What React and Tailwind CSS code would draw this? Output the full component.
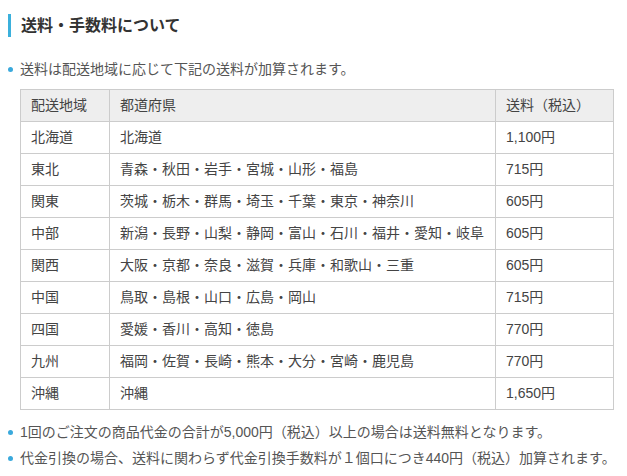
import React from 'react';

const rows = [
  ['北海道', '北海道', '1,100円'],
  ['東北', '青森・秋田・岩手・宮城・山形・福島', '715円'],
  ['関東', '茨城・栃木・群馬・埼玉・千葉・東京・神奈川', '605円'],
  ['中部', '新潟・長野・山梨・静岡・富山・石川・福井・愛知・岐阜', '605円'],
  ['関西', '大阪・京都・奈良・滋賀・兵庫・和歌山・三重', '605円'],
  ['中国', '鳥取・島根・山口・広島・岡山', '715円'],
  ['四国', '愛媛・香川・高知・徳島', '770円'],
  ['九州', '福岡・佐賀・長崎・熊本・大分・宮崎・鹿児島', '770円'],
  ['沖縄', '沖縄', '1,650円'],
];

const Bullet = ({ children }) => (
  <li className="flex items-center h-[24px] text-[14px] text-[#555] whitespace-nowrap">
    <span className="w-[5px] h-[5px] rounded-full bg-[#3aa9dc] ml-[8px] mr-[7px] shrink-0" />
    <span>{children}</span>
  </li>
);

const App = () => {
  return (
    <div
      className="w-[627px] h-[476px] bg-white overflow-hidden pt-[14px]"
      style={{ fontFamily: '"Liberation Sans", "Noto Sans CJK JP", sans-serif' }}
    >
      {/* Heading */}
      <h2 className="ml-[8px] border-l-[3px] border-[#3bb0dc] pl-[10px] h-[23px] leading-[23px] text-[16px] font-bold text-[#333]">
        送料・手数料について
      </h2>

      <ul className="mt-[20px]">
        <Bullet>送料は配送地域に応じて下記の送料が加算されます。</Bullet>
      </ul>

      {/* Shipping table */}
      <table className="ml-[20px] mt-[8px] w-[593px] border-collapse text-[14px] text-[#444] table-fixed">
        <colgroup>
          <col className="w-[89px]" />
          <col className="w-[386px]" />
          <col className="w-[118px]" />
        </colgroup>
        <thead>
          <tr className="bg-[#eeeeee] h-[32px]">
            <th className="border border-[#cccccc] px-[10px] text-left font-normal">配送地域</th>
            <th className="border border-[#cccccc] px-[10px] text-left font-normal">都道府県</th>
            <th className="border border-[#cccccc] px-[10px] text-left font-normal">送料（税込）</th>
          </tr>
        </thead>
        <tbody>
          {rows.map(([area, prefs, price]) => (
            <tr key={area} className="h-[32px]">
              <td className="border border-[#cccccc] px-[10px]">{area}</td>
              <td className="border border-[#cccccc] px-[10px] whitespace-nowrap">{prefs}</td>
              <td className="border border-[#cccccc] px-[10px]">{price}</td>
            </tr>
          ))}
        </tbody>
      </table>

      <ul className="mt-[10px] flex flex-col gap-[2px]">
        <Bullet>1回のご注文の商品代金の合計が5,000円（税込）以上の場合は送料無料となります。</Bullet>
        <Bullet>代金引換の場合、送料に関わらず代金引換手数料が１個口につき440円（税込）加算されます。</Bullet>
      </ul>
    </div>
  );
};

export default App;
